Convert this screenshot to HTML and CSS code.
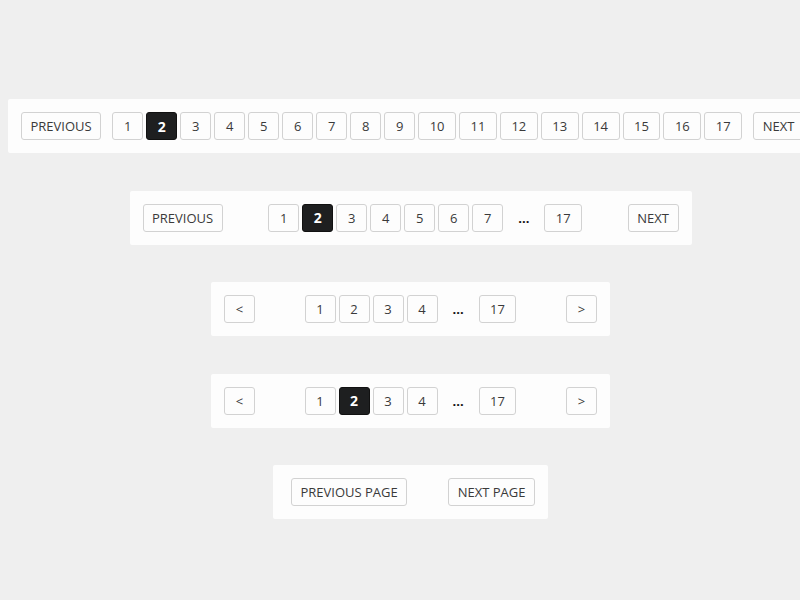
FILE: index.html
```html
<!DOCTYPE html>
<html lang="en">
<head>
    <meta charset="UTF-8">
    <title>Pagination Styles</title>
    <link rel="stylesheet" href="styles.css">
</head>
<body>

<div class="page">

    <!-- full list -->
    <nav class="pager pager-full">
        <a href="#" class="btn btn-text">PREVIOUS</a>
        <div class="pages">
            <a href="#" class="btn">1</a>
            <a href="#" class="btn active">2</a>
            <a href="#" class="btn">3</a>
            <a href="#" class="btn">4</a>
            <a href="#" class="btn">5</a>
            <a href="#" class="btn">6</a>
            <a href="#" class="btn">7</a>
            <a href="#" class="btn">8</a>
            <a href="#" class="btn">9</a>
            <a href="#" class="btn">10</a>
            <a href="#" class="btn">11</a>
            <a href="#" class="btn">12</a>
            <a href="#" class="btn">13</a>
            <a href="#" class="btn">14</a>
            <a href="#" class="btn">15</a>
            <a href="#" class="btn">16</a>
            <a href="#" class="btn">17</a>
        </div>
        <a href="#" class="btn btn-text">NEXT</a>
    </nav>

    <!-- shortened list -->
    <nav class="pager pager-medium">
        <a href="#" class="btn btn-text">PREVIOUS</a>
        <div class="pages">
            <a href="#" class="btn">1</a>
            <a href="#" class="btn active">2</a>
            <a href="#" class="btn">3</a>
            <a href="#" class="btn">4</a>
            <a href="#" class="btn">5</a>
            <a href="#" class="btn">6</a>
            <a href="#" class="btn">7</a>
            <span class="dots">...</span>
            <a href="#" class="btn">17</a>
        </div>
        <a href="#" class="btn btn-text">NEXT</a>
    </nav>

    <!-- arrows, nothing selected -->
    <nav class="pager pager-small">
        <a href="#" class="btn">&lt;</a>
        <div class="pages">
            <a href="#" class="btn">1</a>
            <a href="#" class="btn">2</a>
            <a href="#" class="btn">3</a>
            <a href="#" class="btn">4</a>
            <span class="dots">...</span>
            <a href="#" class="btn">17</a>
        </div>
        <a href="#" class="btn">&gt;</a>
    </nav>

    <!-- arrows, page 2 selected -->
    <nav class="pager pager-small">
        <a href="#" class="btn">&lt;</a>
        <div class="pages">
            <a href="#" class="btn">1</a>
            <a href="#" class="btn active">2</a>
            <a href="#" class="btn">3</a>
            <a href="#" class="btn">4</a>
            <span class="dots">...</span>
            <a href="#" class="btn">17</a>
        </div>
        <a href="#" class="btn">&gt;</a>
    </nav>

    <!-- prev / next only -->
    <nav class="pager pager-simple">
        <a href="#" class="btn btn-text">PREVIOUS PAGE</a>
        <a href="#" class="btn btn-text">NEXT PAGE</a>
    </nav>

</div>

</body>
</html>
```

FILE: styles.css
```css
html, body {
    margin: 0;
    padding: 0;
}
body {
    background: #efefef;
    font-family: "Open Sans", "Noto Sans", Arial, sans-serif;
    font-size: 13px;
    color: #333;
    overflow: hidden;
}
.page {
    width: 805px;
    padding: 99px 8px 0;
    display: flex;
    flex-direction: column;
    align-items: center;
    gap: 37.5px;
}
.pager {
    box-sizing: border-box;
    display: flex;
    align-items: center;
    justify-content: space-between;
    height: 54px;
    padding: 0 13px;
    background: #fdfdfd;
    border-radius: 2px;
}
.pager-full {
    align-self: flex-start;
    justify-content: flex-start;
    gap: 11px;
    white-space: nowrap;
}
.pager-medium {
    width: 562px;
}
.pager-small {
    width: 399px;
}
.pager-simple {
    width: 275px;
    padding-left: 18px;
}
.pages {
    display: flex;
    align-items: center;
    gap: 3px;
}
.btn {
    box-sizing: border-box;
    display: inline-flex;
    align-items: center;
    justify-content: center;
    height: 28px;
    min-width: 31px;
    padding: 0 10.5px;
    border: 1px solid #d2d2d2;
    border-radius: 3px;
    background: #fdfdfd;
    color: #3a3a3a;
    text-decoration: none;
    flex-shrink: 0;
}
.btn-text {
    padding: 0 8.5px;
}
.btn:hover {
    border-color: #aaa;
}
.btn.active {
    background: #1e1f20;
    border-color: #111;
    color: #fff;
    font-weight: bold;
    font-size: 14px;
}
.dots {
    display: inline-flex;
    align-items: center;
    justify-content: center;
    width: 35px;
    height: 28px;
    color: #111;
    font-weight: bold;
}
```
